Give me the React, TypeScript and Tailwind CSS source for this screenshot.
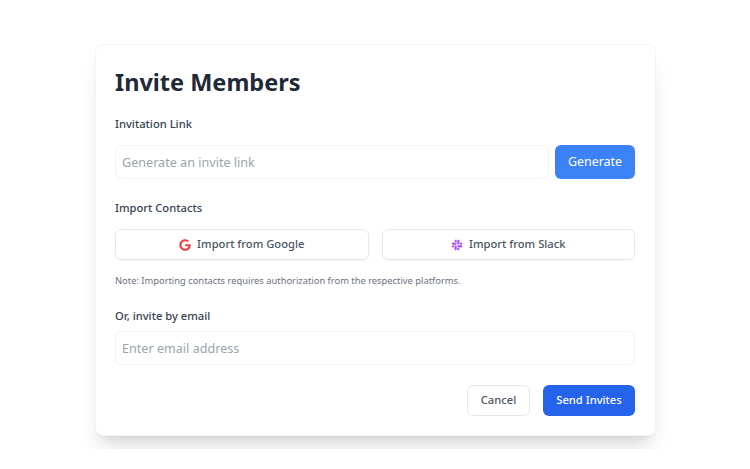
import React from "react";
import { FaGoogle, FaSlack } from "react-icons/fa";

const App: React.FC = () => {
  return (
    <div className="w-[750px] h-[469px] bg-white overflow-hidden font-['Noto_Sans',sans-serif] pt-[28px] pl-[78px]">
      <div className="w-[594px] h-[421px] overflow-hidden pt-[16px] pl-[17px]">
        <div className="w-[561px] h-[392px] bg-white rounded-lg border border-[#f3f4f6] shadow-xl pl-[19px] pr-[19px] pt-[20px]">
          <h1 className="text-[23.5px] leading-[34px] font-bold text-[#1f2937]">Invite Members</h1>
          <div className="mt-[16px] text-[11.2px] leading-[18px] font-medium text-[#374151]">Invitation Link</div>
          <div className="mt-[12px] flex gap-[6px] mr-[1px]">
            <input
              placeholder="Generate an invite link"
              className="flex-1 h-[34px] px-[6px] text-[12.6px] rounded-md border border-[#f3f4f6] placeholder:text-[#9ca3af] outline-none"
            />
            <button className="w-[80px] h-[34px] rounded-md bg-[#3b82f6] text-white text-[12.4px]">Generate</button>
          </div>
          <div className="mt-[20px] text-[11.2px] leading-[18px] font-medium text-[#374151]">Import Contacts</div>
          <div className="mt-[12px] grid grid-cols-2 gap-[13px] mr-[1px]">
            <button className="h-[31px] flex items-center justify-center gap-[6px] rounded-md border border-[#e5e7eb] shadow-xs text-[11.2px] font-medium text-[#4b5563]">
              <FaGoogle className="text-[#ef4444] text-[12px]" />
              Import from Google
            </button>
            <button className="h-[31px] flex items-center justify-center gap-[6px] rounded-md border border-[#e5e7eb] shadow-xs text-[11.2px] font-medium text-[#4b5563]">
              <FaSlack className="text-[#a855f7] text-[12px]" />
              Import from Slack
            </button>
          </div>
          <p className="mt-[13px] text-[9.35px] leading-[16px] text-[#6b7280]">
            Note: Importing contacts requires authorization from the respective platforms.
          </p>
          <div className="mt-[18px] text-[11.2px] leading-[18px] font-medium text-[#374151]">Or, invite by email</div>
          <input
            placeholder="Enter email address"
            className="mt-[6px] w-[520px] h-[34px] px-[6px] text-[12.6px] rounded-md border border-[#f3f4f6] placeholder:text-[#9ca3af] outline-none"
          />
          <div className="mt-[20px] flex justify-end gap-[13px] mr-[1px]">
            <button className="w-[63px] h-[31px] rounded-md border border-[#e5e7eb] text-[11.2px] font-medium text-[#4b5563]">Cancel</button>
            <button className="w-[92px] h-[31px] rounded-md bg-[#2563eb] text-white text-[11.2px] font-medium">Send Invites</button>
          </div>
        </div>
      </div>
    </div>
  );
};

export default App;
